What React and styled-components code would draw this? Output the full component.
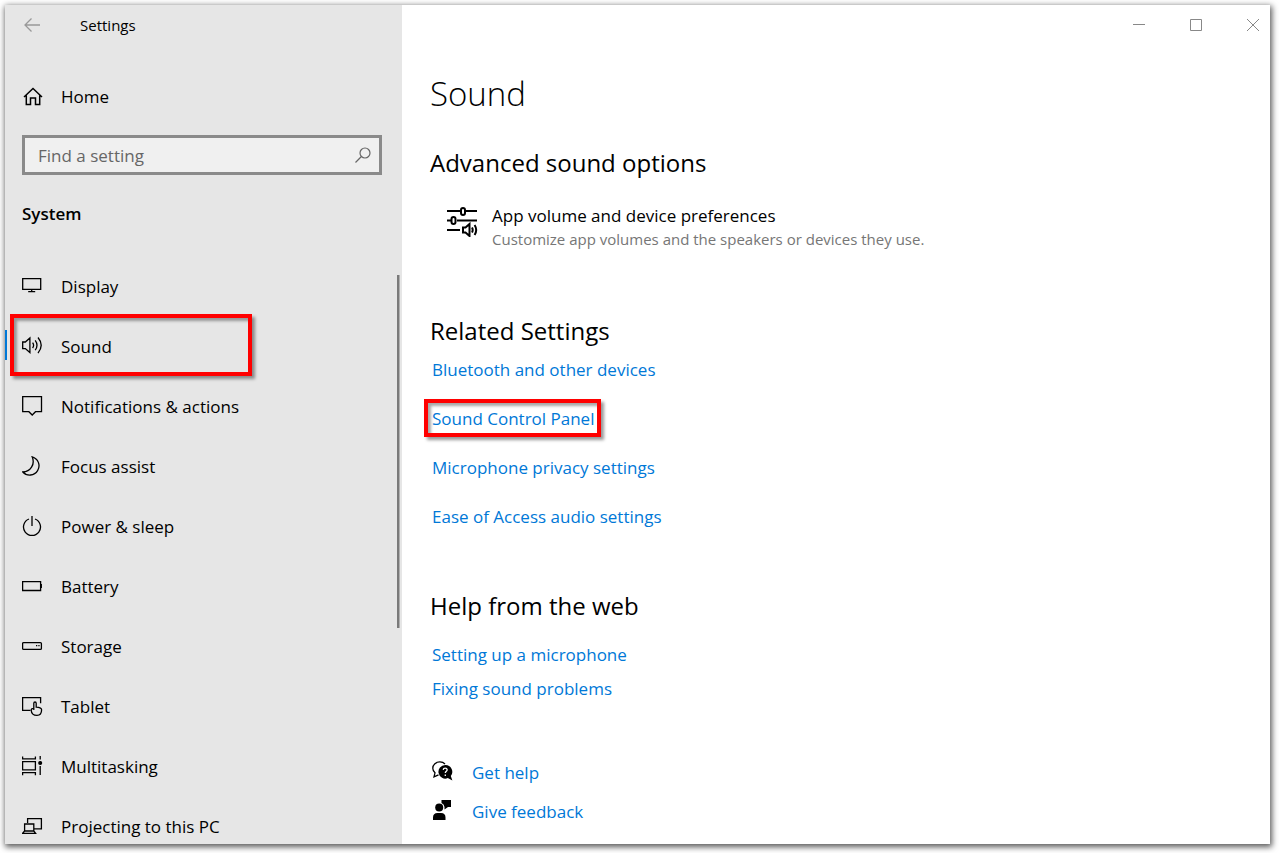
import React from "react";
import styled, { createGlobalStyle, css } from "styled-components";

const GlobalStyle = createGlobalStyle`
  *, *::before, *::after { box-sizing: border-box; }
  body {
    margin: 0;
    background: #fff;
    color: #000;
    font-family: "Segoe UI", "Open Sans", "Noto Sans", sans-serif;
    font-size: 17px;
    line-height: 24px;
  }
  h1, h2, p, ul { margin: 0; padding: 0; }
  ul { list-style: none; }
  button { font: inherit; padding: 0; border: 0; background: none; }
`;

const Desktop = styled.div`
  height: 100vh;
  padding: 5px 9px 9px 5px;
  overflow: hidden;
`;

const Window = styled.div`
  display: flex;
  height: 100%;
  background: #fff;
  box-shadow: 1px 2px 6px 1px rgba(0, 0, 0, 0.65);
`;

const Sidebar = styled.aside`
  display: flex;
  flex-direction: column;
  flex: 0 0 397px;
  min-height: 0;
  overflow: hidden;
  background: #e6e6e6;
`;

const TitleBar = styled.header`
  display: flex;
  flex: none;
  align-items: center;
  height: 40px;
`;

const BackButton = styled.button`
  display: grid;
  place-items: center;
  width: 54px;
  height: 40px;
  color: #999;
`;

const WindowTitle = styled.span`
  padding-left: 21px;
  font-size: 15px;
`;

const HomeLink = styled.a`
  display: flex;
  align-items: center;
  gap: 17px;
  height: 40px;
  margin: 32px 20px 18px 17px;
  color: inherit;
  text-decoration: none;
`;

const SearchBox = styled.label`
  display: flex;
  flex: none;
  align-items: center;
  height: 40px;
  margin: 0 20px 0 17px;
  padding: 0 7px 0 13px;
  border: 3px solid #8a8a8a;
  background: #f0f0f0;
  color: #666;
`;

const SearchInput = styled.input`
  flex: 1;
  min-width: 0;
  padding: 2px 0 0;
  border: 0;
  outline: 0;
  background: none;
  font: inherit;
  color: #000;
  &::placeholder { color: #666; opacity: 1; }
`;

const GroupTitle = styled.h2`
  margin: 27px 17px 31px;
  font-size: 17px;
  font-weight: 600;
`;

const Nav = styled.nav`
  position: relative;
  flex: 1;
  min-height: 0;
`;

const ScrollThumb = styled.span`
  position: absolute;
  top: 18px;
  right: 2px;
  width: 3px;
  height: 353px;
  background: #7a7a7a;
  border-right: 1px solid #b0b0b0;
`;

const NavItem = styled.li`
  position: relative;
  height: 60px;
`;

const NavLink = styled.a`
  display: flex;
  align-items: center;
  gap: 17px;
  height: 100%;
  padding-left: 17px;
  color: inherit;
  text-decoration: none;
  ${(p) => p.$active && css`
    &::before {
      content: "";
      position: absolute;
      top: 13px;
      left: 0;
      width: 2px;
      height: 30px;
      background: #0078d7;
    }
  `}
`;

const highlight = css`
  content: "";
  position: absolute;
  border: 4px solid #f00;
  box-shadow: 3px 3px 3px rgba(0, 0, 0, 0.4), inset 3px 3px 3px rgba(0, 0, 0, 0.35);
  pointer-events: none;
`;

const NavHighlight = styled.span`
  ${highlight}
  inset: -3px auto auto 5px;
  width: 242px;
  height: 62px;
`;

const Content = styled.main`
  display: flex;
  flex: 1;
  flex-direction: column;
  min-width: 0;
`;

const Controls = styled.div`
  display: flex;
  margin-left: auto;
`;

const ControlButton = styled.button`
  display: grid;
  place-items: center;
  width: 57px;
  height: 40px;
  color: #888;
  &:last-child { width: 34px; margin-left: 12px; }
`;

const Page = styled.div`
  padding: 24px 28px 0;
`;

const PageTitle = styled.h1`
  font-size: 33px;
  font-weight: 300;
  line-height: 50px;
`;

const SectionTitle = styled.h2`
  margin-top: ${(p) => p.$top};
  font-size: 24px;
  font-weight: 400;
  line-height: 36px;
`;

const Preference = styled.a`
  display: flex;
  align-items: flex-start;
  gap: 14px;
  margin-top: 23px;
  padding-left: 17px;
  color: inherit;
  text-decoration: none;
  svg { margin-top: 2px; }
`;

const PreferenceNote = styled.p`
  color: #767676;
  font-size: 15px;
  line-height: 22px;
`;

const LinkList = styled.ul`
  display: flex;
  flex-direction: column;
  align-items: flex-start;
  gap: ${(p) => p.$gap};
  margin-top: ${(p) => p.$top};
  padding-left: 2px;
`;

const TextLink = styled.a`
  display: flex;
  align-items: center;
  position: relative;
  gap: 19px;
  color: #0078d7;
  text-decoration: none;
  svg { margin-bottom: 3px; color: #000; }
  ${(p) => p.$marked && css`
    &::after {
      ${highlight}
      inset: -8px -7px -6px -8px;
    }
  `}
`;

const Svg = ({ w = 22, h = w, children, sw = 1.3 }) => (
  <svg width={w} height={h} viewBox={`0 0 ${w} ${h}`} fill="none" stroke="currentColor" strokeWidth={sw} aria-hidden="true">
    {children}
  </svg>
);

const icons = {
  display: (
    <Svg>
      <path d="M.7 2.7h18v10.600H.7zM9.700 13.300v2.200M6.200 15.600h7" />
    </Svg>
  ),
  sound: (
    <Svg>
      <path d="M.7 6v6.600h2.600l4.600 4V2L3.300 6zM10.600 6.600q2 2.700 0 5.400M13.200 4.400q3.600 4.900 0 9.800M16 1.500q6.400 7.800 0 15.600" />
    </Svg>
  ),
  notifications: (
    <Svg>
      <path d="M.7.7h18.800v15h-6L10.200 19l-3.300-3.300H.7z" />
    </Svg>
  ),
  focus: (
    <Svg>
      <path d="M10.200 .8a9.300 9.300 0 1 1-9.400 15.200C8.400 15.800 13.400 8.500 10.200 .8z" />
    </Svg>
  ),
  power: (
    <Svg>
      <path d="M7 3a8.500 8.500 0 1 0 6 0M10 0v10" />
    </Svg>
  ),
  battery: (
    <Svg>
      <path d="M.6 5.600h18v8.900H.6z" />
      <path d="M19.300 8v4" />
    </Svg>
  ),
  storage: (
    <Svg>
      <rect x=".6" y="6.600" width="18.800" height="6.800" rx="1" />
      <path d="M14 9.600h1.300M16.300 9.600h1.300" />
    </Svg>
  ),
  tablet: (
    <Svg>
      <path d="M8.500 14.400H.6V1.600h18v5.600" />
      <path d="M11.800 14V7.200q0-1.200 1.200-1.200t1.200 1.200v4q5.400.4 5.400 2.600c0 3-1.600 5.600-4.600 5.600-3.600 0-5.600-2.400-5.800-5.200q0-1.800 2.600-1.800" />
    </Svg>
  ),
  multitasking: (
    <Svg>
      <path d="M.6.4v2.400h12.800V.4M.6 5.600h12.800v8.200H.6zM.6 19.200v-2.600h12.800v2.600M18.200 0v3.600M18.200 10v9" />
      <circle cx="18.200" cy="7" r="1.400" fill="currentColor" />
    </Svg>
  ),
  projecting: (
    <Svg>
      <path d="M5.600 7V2.600h13.800v10.200h-7.600M2.600 8h9.200v7H2.600zM2.600 15l-2 2.400h13l-1.800-2.400" />
    </Svg>
  ),
};

const navItems = [
  ["display", "Display"],
  ["sound", "Sound"],
  ["notifications", "Notifications & actions"],
  ["focus", "Focus assist"],
  ["power", "Power & sleep"],
  ["battery", "Battery"],
  ["storage", "Storage"],
  ["tablet", "Tablet"],
  ["multitasking", "Multitasking"],
  ["projecting", "Projecting to this PC"],
];

const relatedLinks = [
  "Bluetooth and other devices",
  "Sound Control Panel",
  "Microphone privacy settings",
  "Ease of Access audio settings",
];

const MixerIcon = () => (
  <Svg w={31} sw={2}>
    <path d="M0 5h13M19 5h11M0 14.500h4M10 14.500h20M0 24h13" />
    <rect x="14" y="2" width="4" height="7" rx="2" />
    <rect x="4.500" y="11" width="4" height="7" rx="2" />
    <path d="M16 21.500v5h2.500l4 3.500V18l-4 3.500zM25 21.500q1.400 2.500 0 5M27.600 19q3.200 5 0 10" />
  </Svg>
);

const HelpIcon = () => (
  <Svg w={21}>
    <path d="M6.500 13.800 2 15.800l1-4A7 6.300 0 1 1 13 3" />
    <path d="M13.200 4a6.800 6.800 0 1 0 2.600 13.100l4.600 2.500-1.600-4.600A6.800 6.800 0 0 0 13.200 4z" fill="currentColor" stroke="none" />
    <path d="M11.200 8.800q.2-1.600 2-1.600t2 1.600c0 1.400-1.900 1.400-1.900 3.200M13.300 13.400V15" stroke="#fff" />
  </Svg>
);

const FeedbackIcon = () => (
  <Svg w={21}>
    <g fill="currentColor" stroke="none">
      <circle cx="7.200" cy="7.600" r="4" />
      <path d="M1 20v-2.500q0-4.500 4.500-4.500h3.500q4.500 0 4.500 4.500V20zM9.500 0H19v7h-3l-3.500 2.600V7q-.4-3-3-4z" />
    </g>
  </Svg>
);

export default function App() {
  return (
    <Desktop>
      <GlobalStyle />
      <Window>
        <Sidebar>
          <TitleBar>
            <BackButton aria-label="Back">
              <Svg w={16}>
                <path d="M1 8h15M7.500 1.500 1 8l6.500 6.500" />
              </Svg>
            </BackButton>
            <WindowTitle>Settings</WindowTitle>
          </TitleBar>
          <HomeLink href="#home">
            <Svg w={22} sw={1.5}>
              <path d="M2 11 11 2.500l9 8.500M4.300 9.500v9h4.200v-6.500h5v6.500h4.200v-9" />
            </Svg>
            Home
          </HomeLink>
          <SearchBox>
            <SearchInput type="text" placeholder="Find a setting" aria-label="Find a setting" />
            <Svg w={18} sw={1.2}>
              <circle cx="11" cy="7" r="5" />
              <path d="M7.400 10.500 1.500 16.500" />
            </Svg>
          </SearchBox>
          <GroupTitle>System</GroupTitle>
          <Nav aria-label="System">
            <ul>
              {navItems.map(([id, label]) => (
                <NavItem key={id}>
                  <NavLink href={`#${id}`} $active={id === "sound"}>
                    {icons[id]}
                    {label}
                  </NavLink>
                  {id === "sound" && <NavHighlight />}
                </NavItem>
              ))}
            </ul>
            <ScrollThumb />
          </Nav>
        </Sidebar>
        <Content>
          <TitleBar>
            <Controls>
              <ControlButton aria-label="Minimize">
                <Svg w={12} sw={1}><path d="M0 5.500h12" /></Svg>
              </ControlButton>
              <ControlButton aria-label="Maximize">
                <Svg w={12} sw={1}><path d="M.5.5h11v11H.5z" /></Svg>
              </ControlButton>
              <ControlButton aria-label="Close">
                <Svg w={12} sw={1}><path d="m0 0 12 12M12 0 0 12" /></Svg>
              </ControlButton>
            </Controls>
          </TitleBar>
          <Page>
            <PageTitle>Sound</PageTitle>
            <SectionTitle $top="26px">Advanced sound options</SectionTitle>
            <Preference href="#volume">
              <MixerIcon />
              <div>
                <p>App volume and device preferences</p>
                <PreferenceNote>Customize app volumes and the speakers or devices they use.</PreferenceNote>
              </div>
            </Preference>
            <SectionTitle $top="63px">Related Settings</SectionTitle>
            <LinkList $top="9px" $gap="25px">
              {relatedLinks.map((label) => (
                <li key={label}>
                  <TextLink href="#related" $marked={label === "Sound Control Panel"}>{label}</TextLink>
                </li>
              ))}
            </LinkList>
            <SectionTitle $top="59px">Help from the web</SectionTitle>
            <LinkList $top="19px" $gap="10px">
              <li><TextLink href="#microphone">Setting up a microphone</TextLink></li>
              <li><TextLink href="#problems">Fixing sound problems</TextLink></li>
            </LinkList>
            <LinkList $top="60px" $gap="15px">
              <li><TextLink href="#help"><HelpIcon />Get help</TextLink></li>
              <li><TextLink href="#feedback"><FeedbackIcon />Give feedback</TextLink></li>
            </LinkList>
          </Page>
        </Content>
      </Window>
    </Desktop>
  );
}
